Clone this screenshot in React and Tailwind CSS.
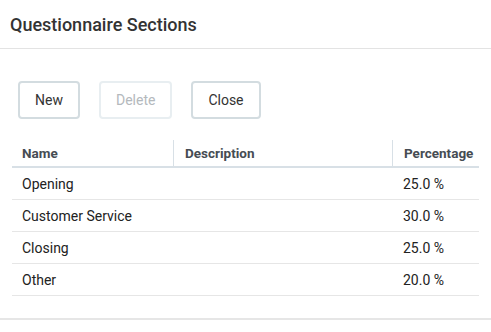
import React from 'react';

const rows = [
  { name: 'Opening', description: '', percentage: '25.0 %' },
  { name: 'Customer Service', description: '', percentage: '30.0 %' },
  { name: 'Closing', description: '', percentage: '25.0 %' },
  { name: 'Other', description: '', percentage: '20.0 %' },
];

const ActionButton = ({ children, disabled }) => (
  <button
    type="button"
    disabled={disabled}
    className={
      disabled
        ? 'h-[38px] px-[15px] border-2 border-[#e8eef1] rounded-[4px] bg-white text-[14px] text-[#b4b9bd]'
        : 'h-[38px] px-[15px] border-2 border-[#d3dce0] rounded-[4px] bg-white text-[14px] text-[#333]'
    }
  >
    {children}
  </button>
);

const App = () => {
  return (
    <div className="w-[491px] h-[332px] bg-white font-['Roboto',sans-serif] flex flex-col">
      {/* Header */}
      <div className="h-[49px] flex items-center pl-[10px] pt-[1px] border-b border-[#e3e3e3]">
        <h1 className="text-[18px] font-medium text-[#333]">Questionnaire Sections</h1>
      </div>

      {/* Toolbar */}
      <div className="flex gap-[19px] pl-[18px] pt-[32px]">
        <ActionButton>New</ActionButton>
        <ActionButton disabled>Delete</ActionButton>
        <ActionButton>Close</ActionButton>
      </div>

      {/* Table */}
      <div className="mx-[12px] mt-[21px]">
        <div className="grid grid-cols-[161px_219px_1fr] h-[28px] border-b-2 border-[#d8e0e6] text-[13.5px] font-bold text-[#464c53]">
          <div className="flex items-center pl-[10px]">Name</div>
          <div className="flex items-center pl-[11px] border-l border-[#d8e0e6]">Description</div>
          <div className="flex items-center pl-[11px] border-l border-[#d8e0e6]">Percentage</div>
        </div>
        {rows.map((row) => (
          <div
            key={row.name}
            className="grid grid-cols-[161px_219px_1fr] h-[32px] pt-[2px] border-b border-[#e6e6e6] text-[14px] text-[#222]"
          >
            <div className="flex items-center pl-[10px]">{row.name}</div>
            <div className="flex items-center pl-[11px]">{row.description}</div>
            <div className="flex items-center pl-[11px]">{row.percentage}</div>
          </div>
        ))}
      </div>

      <div className="mt-[22px] border-b-2 border-[#e6e6e6]" />
    </div>
  );
};

export default App;
